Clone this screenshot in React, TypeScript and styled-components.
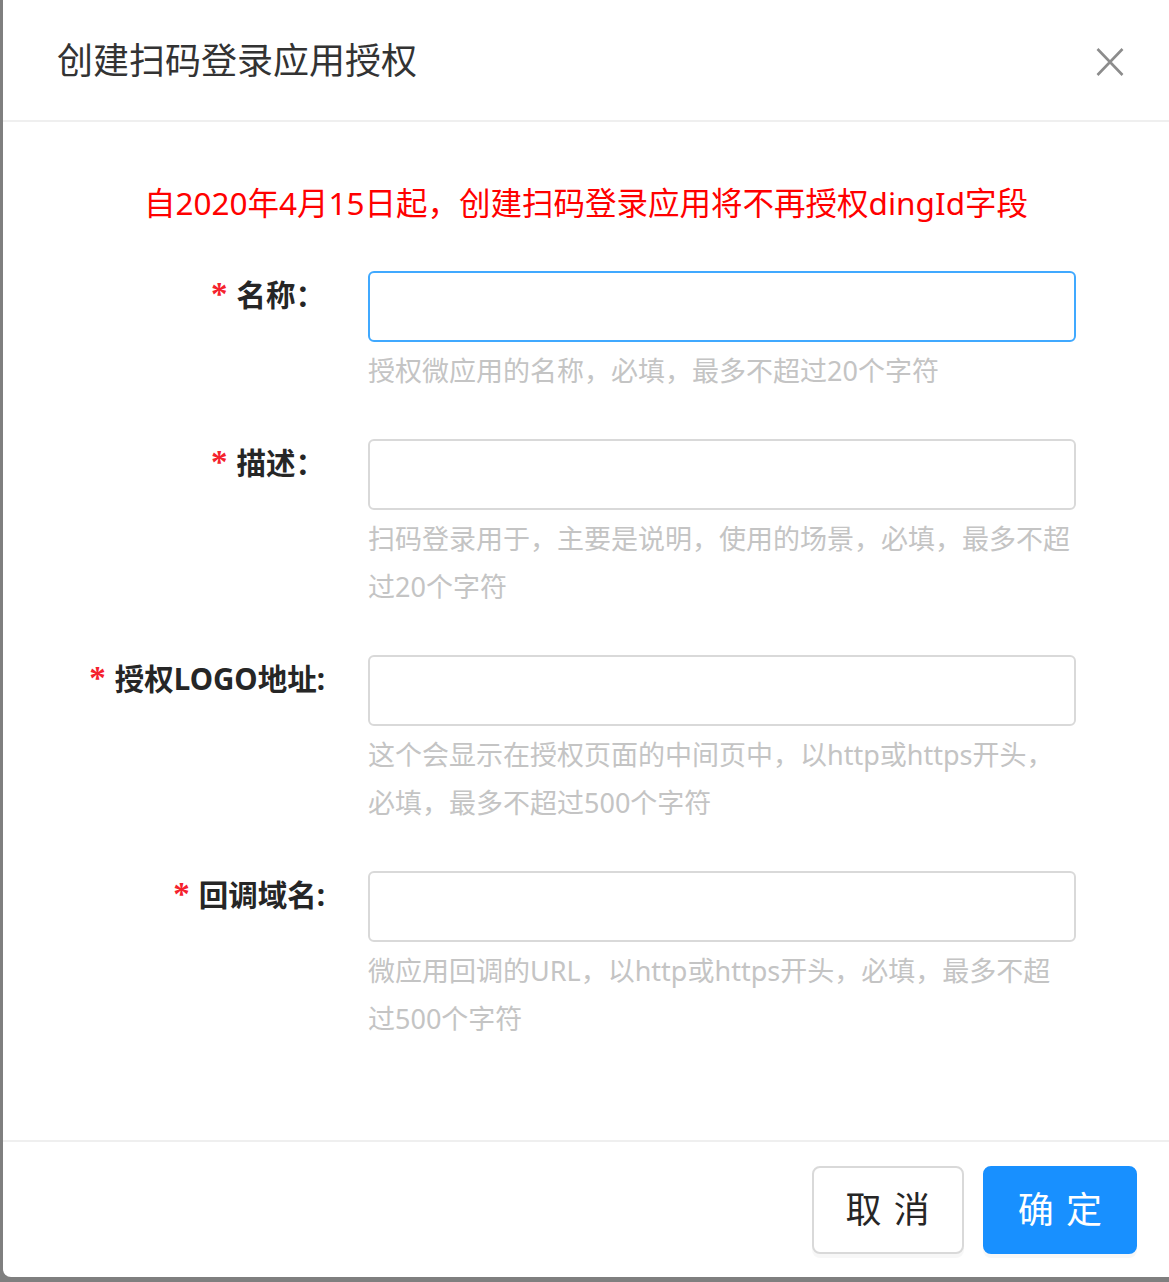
import React from "react";
import styled, { createGlobalStyle } from "styled-components";

const Global = createGlobalStyle`
  html, body {
    margin: 0;
    padding: 0;
    background: #7f7f7f;
  }
  body {
    font-family: "Noto Sans", "Noto Sans CJK SC", sans-serif;
    overflow: hidden;
  }
  * { box-sizing: border-box; }
`;

const Modal = styled.div`
  margin-left: 3px;
  width: 1166px;
  background: #fff;
  border-radius: 0 0 0 8px;
  display: flex;
  flex-direction: column;
`;

const Header = styled.div`
  height: 122px;
  border-bottom: 2px solid #efefef;
  display: flex;
  align-items: center;
  justify-content: space-between;
  padding: 0 44px 0 54px;
`;

const Title = styled.div`
  font-size: 36px;
  line-height: 48px;
  color: #333;
  font-weight: 400;
  padding-top: 2px;
`;

const CloseButton = styled.button`
  width: 30px;
  height: 30px;
  border: none;
  background: none;
  padding: 0;
  display: flex;
  align-items: center;
  justify-content: center;
  cursor: pointer;
  margin-top: 4px;
`;

const Body = styled.div`
  padding: 57px 0 53px;
`;

const Notice = styled.div`
  text-align: center;
  color: #ff0000;
  font-size: 31.5px;
  line-height: 48px;
  margin-bottom: 44px;
`;

const Row = styled.div`
  display: grid;
  grid-template-columns: 322px 708px;
  column-gap: 43px;
  margin-bottom: 44px;
`;

const Label = styled.label`
  text-align: right;
  font-size: 29.5px;
  font-weight: 700;
  line-height: 48px;
  color: #262626;
  white-space: nowrap;
`;

const Asterisk = styled.span`
  color: #f5222d;
  font-family: "Liberation Serif", serif;
  font-size: 33px;
  font-weight: 700;
  margin-right: 9px;
  position: relative;
  top: -1px;
`;

const Control = styled.div`
  display: flex;
  flex-direction: column;
`;

const Input = styled.input<{ $focused?: boolean }>`
  height: 71px;
  width: 100%;
  border: 2px solid ${(p) => (p.$focused ? "#40a9ff" : "#d9d9d9")};
  border-radius: 6px;
  outline: none;
  background: #fff;
  font-size: 28px;
  padding: 0 22px;
  font-family: inherit;
`;

const Help = styled.div`
  margin-top: 5px;
  font-size: 27px;
  line-height: 48px;
  color: #c4c4c4;
`;

const Footer = styled.div`
  border-top: 2px solid #efefef;
  padding: 24px 32px 23px;
  display: flex;
  justify-content: flex-end;
  gap: 19px;
`;

const Button = styled.button<{ $primary?: boolean }>`
  height: 88px;
  padding: 0 ${(p) => (p.$primary ? "33px" : "32px")};
  border-radius: 8px;
  border: 2px solid ${(p) => (p.$primary ? "#1890ff" : "#d9d9d9")};
  background: ${(p) => (p.$primary ? "#1890ff" : "#fff")};
  color: ${(p) => (p.$primary ? "#fff" : "#262626")};
  font-family: "Noto Sans", "Noto Sans CJK SC", sans-serif;
  font-size: 36px;
  line-height: 1;
  white-space: nowrap;
  box-shadow: 0 4px 0 rgba(0, 0, 0, 0.03);
  cursor: pointer;
  span {
    letter-spacing: 0.34em;
    margin-right: -0.34em;
  }
`;

const fields = [
  { label: "名称：", help: "授权微应用的名称，必填，最多不超过20个字符", focused: true },
  { label: "描述：", help: "扫码登录用于，主要是说明，使用的场景，必填，最多不超过20个字符" },
  { label: "授权LOGO地址:", help: "这个会显示在授权页面的中间页中，以http或https开头，必填，最多不超过500个字符" },
  { label: "回调域名:", help: "微应用回调的URL，以http或https开头，必填，最多不超过500个字符" },
];

export default function App() {
  return (
    <>
      <Global />
      <Modal>
        <Header>
          <Title>创建扫码登录应用授权</Title>
          <CloseButton aria-label="close">
            <svg width="28" height="30" viewBox="0 0 28 30">
              <path d="M1.5 2 L26.5 28 M26.5 2 L1.5 28" stroke="#8c8c8c" strokeWidth="2.6" fill="none" />
            </svg>
          </CloseButton>
        </Header>
        <Body>
          <Notice>自2020年4月15日起，创建扫码登录应用将不再授权dingId字段</Notice>
          {fields.map((f) => (
            <Row key={f.label}>
              <Label>
                <Asterisk>*</Asterisk>
                {f.label}
              </Label>
              <Control>
                <Input $focused={f.focused} />
                <Help>{f.help}</Help>
              </Control>
            </Row>
          ))}
        </Body>
        <Footer>
          <Button>
            <span>取消</span>
          </Button>
          <Button $primary>
            <span>确定</span>
          </Button>
        </Footer>
      </Modal>
    </>
  );
}
